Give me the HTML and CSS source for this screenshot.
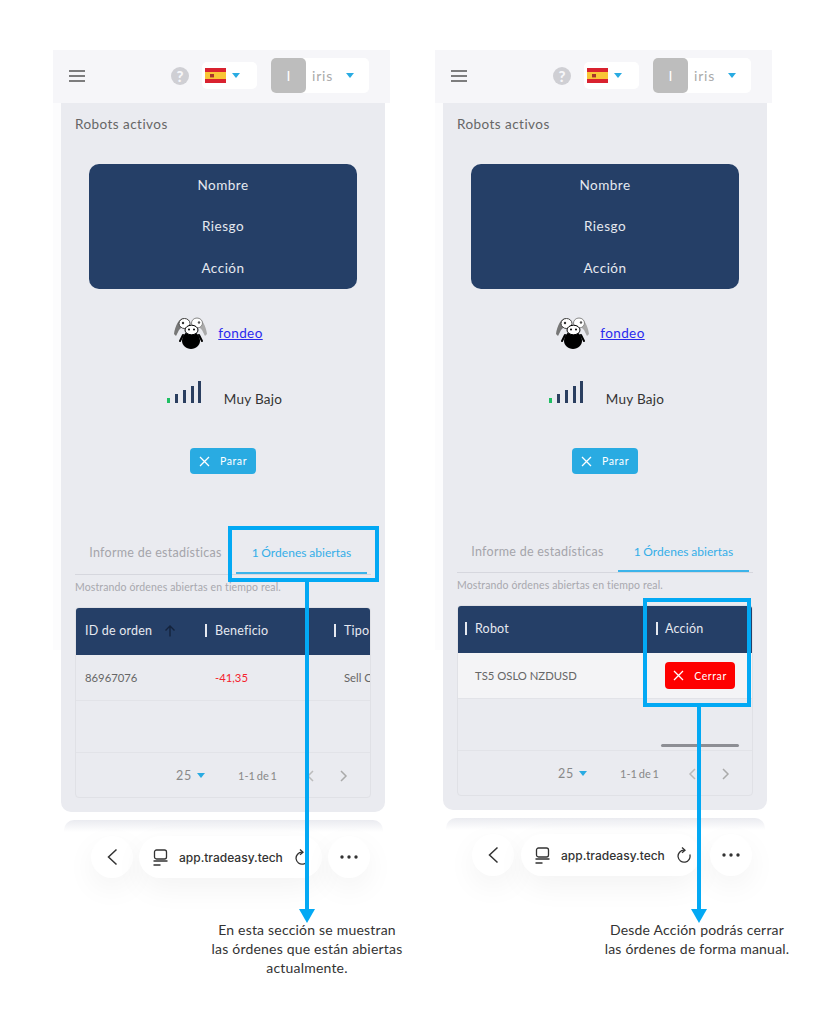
FILE: index.html
```html
<!DOCTYPE html>
<html lang="es">
<head>
    <meta charset="UTF-8">
    <meta name="viewport" content="width=device-width, initial-scale=1.0">
    <title>Órdenes abiertas</title>
    <link rel="stylesheet" href="styles.css">
</head>
<body>

<div class="page">

    <!-- Left screen: open orders tab -->
    <section class="phone">
        <header class="topbar">
            <svg class="menu" width="16" height="12" viewBox="0 0 16 12"><path d="M0 1h16M0 6h16M0 11h16" stroke="#555" stroke-width="1.6"/></svg>
            <span class="help">?</span>
            <div class="lang">
                <svg class="flag" width="21" height="15" viewBox="0 0 21 15"><rect width="21" height="15" fill="#d9222f"/><rect y="4" width="21" height="7" fill="#f9c536"/><rect x="5" y="6" width="4" height="3.4" fill="#a8342a"/></svg>
                <span class="caret"></span>
            </div>
            <div class="user">
                <span class="avatar">I</span>
                <span class="user-name">iris</span>
                <span class="caret"></span>
            </div>
        </header>

        <main class="panel">
            <div class="panel-title">Robots activos</div>
            <div class="robot-head">
                <div>Nombre</div>
                <div>Riesgo</div>
                <div>Acción</div>
            </div>
            <div class="robot-name">
                <svg width="33" height="32" viewBox="0 0 33 32">
                    <path d="M10 1C5 1 1 9 0 17l2 2 3-6 4-4z" fill="#777"/>
                    <path d="M23 1c5 0 9 8 10 16l-2 2-3-6-4-4z" fill="#aaa"/>
                    <ellipse cx="10.500" cy="6.500" rx="5.500" ry="5" fill="#fff" stroke="#444"/>
                    <ellipse cx="23" cy="6" rx="5.500" ry="5" fill="#fff" stroke="#888"/>
                    <circle cx="9" cy="6" r="1.200" fill="#333"/><circle cx="25" cy="5.500" r="1.200" fill="#555"/>
                    <path d="M17 14c6 0 9 6 9 10 0 4-4 8-9 8s-9-4-9-8c0-4 3-10 9-10z" fill="#000"/>
                    <path d="M9 18l-3 6M25 18l3 6" stroke="#000" stroke-width="2" stroke-linecap="round"/>
                    <ellipse cx="17.500" cy="13" rx="6.500" ry="4.800" fill="#fff" stroke="#000"/>
                    <circle cx="15" cy="12.500" r="1" fill="#000"/><circle cx="20" cy="12.500" r="1" fill="#000"/>
                </svg>
                <a class="robot-link" href="#">fondeo</a>
            </div>
            <div class="risk">
                <svg class="signal" width="34" height="23" viewBox="0 0 34 23">
                    <rect x="0" y="17" width="3" height="5" fill="#1fbf63"/>
                    <rect x="8" y="13" width="3" height="9" fill="#2b3f60"/>
                    <rect x="16" y="9" width="3" height="13" fill="#2b3f60"/>
                    <rect x="24" y="5" width="3" height="17" fill="#2b3f60"/>
                    <rect x="31" y="0" width="3" height="22" fill="#2b3f60"/>
                </svg>
                <span>Muy Bajo</span>
            </div>
            <button class="btn btn-stop">
                <svg width="11" height="11" viewBox="0 0 11 11"><path d="M1 1l9 9M10 1l-9 9" stroke="#fff" stroke-width="1.3"/></svg>
                Parar
            </button>

            <div class="tabs">
                <div class="tab">Informe de estadísticas</div>
                <div class="tab tab-active">1 Órdenes abiertas</div>
            </div>
            <div class="note">Mostrando órdenes abiertas en tiempo real.</div>

            <div class="table">
                <div class="row-head">
                    <div class="col col-id">ID de orden
                        <svg class="sort" width="12" height="12" viewBox="0 0 12 12"><path d="M6 11.500V1M1.500 5.500L6 1l4.500 4.500" fill="none" stroke="#14233c" stroke-width="1.400"/></svg>
                    </div>
                    <div class="col col-sep col-profit">Beneficio</div>
                    <div class="col col-sep col-type">Tipo</div>
                </div>
                <div class="row-body">
                    <div class="col col-id">86967076</div>
                    <div class="col col-profit cell-loss">-41,35</div>
                    <div class="col col-type">Sell Orden</div>
                </div>
                <div class="row-empty"></div>
                <div class="table-foot">
                    <span class="per-page">25</span>
                    <span class="caret"></span>
                    <span class="range">1-1 de 1</span>
                    <svg class="page-prev" width="8" height="12" viewBox="0 0 8 12"><path d="M7 1L2 6l5 5" fill="none" stroke="#bbb" stroke-width="1.500"/></svg>
                    <svg class="page-next" width="8" height="12" viewBox="0 0 8 12"><path d="M1 1l5 5-5 5" fill="none" stroke="#aaa" stroke-width="1.500"/></svg>
                </div>
            </div>
        </main>

        <div class="next-card"></div>

        <div class="browser-bar">
            <span class="round-btn">
                <svg width="12" height="18" viewBox="0 0 12 18"><path d="M10.500 1.500L2.500 9l8 7.500" fill="none" stroke="#333" stroke-width="1.500"/></svg>
            </span>
            <div class="url-pill">
                <svg class="tab-icon" width="15" height="17" viewBox="0 0 15 17"><rect x="1.500" y="1" width="12" height="9" rx="2" fill="none" stroke="#333" stroke-width="1.300"/><path d="M0.500 12h14M0.500 16h7" stroke="#333" stroke-width="1.300"/></svg>
                <span class="url">app.tradeasy.tech</span>
                <svg class="reload" width="14" height="16" viewBox="0 0 14 16"><path d="M12.800 7.500A6 6 0 1 1 7 3.200" fill="none" stroke="#333" stroke-width="1.300"/><path d="M5 0.500L8 3.200 5 5.800" fill="none" stroke="#333" stroke-width="1.300"/></svg>
            </div>
            <span class="round-btn">
                <svg width="18" height="4" viewBox="0 0 18 4"><circle cx="2" cy="2" r="1.700" fill="#333"/><circle cx="9" cy="2" r="1.700" fill="#333"/><circle cx="16" cy="2" r="1.700" fill="#333"/></svg>
            </span>
        </div>

        <!-- Callout -->
        <div class="mark mark-tabs"></div>
        <div class="stem stem-tabs"></div>
        <div class="head head-tabs"></div>
        <p class="caption caption-tabs">En esta sección se muestran<br>las órdenes que están abiertas<br>actualmente.</p>
    </section>

    <!-- Right screen: action column -->
    <section class="phone phone-action">
        <header class="topbar">
            <svg class="menu" width="16" height="12" viewBox="0 0 16 12"><path d="M0 1h16M0 6h16M0 11h16" stroke="#555" stroke-width="1.6"/></svg>
            <span class="help">?</span>
            <div class="lang">
                <svg class="flag" width="21" height="15" viewBox="0 0 21 15"><rect width="21" height="15" fill="#d9222f"/><rect y="4" width="21" height="7" fill="#f9c536"/><rect x="5" y="6" width="4" height="3.4" fill="#a8342a"/></svg>
                <span class="caret"></span>
            </div>
            <div class="user">
                <span class="avatar">I</span>
                <span class="user-name">iris</span>
                <span class="caret"></span>
            </div>
        </header>

        <main class="panel">
            <div class="panel-title">Robots activos</div>
            <div class="robot-head">
                <div>Nombre</div>
                <div>Riesgo</div>
                <div>Acción</div>
            </div>
            <div class="robot-name">
                <svg width="33" height="32" viewBox="0 0 33 32">
                    <path d="M10 1C5 1 1 9 0 17l2 2 3-6 4-4z" fill="#777"/>
                    <path d="M23 1c5 0 9 8 10 16l-2 2-3-6-4-4z" fill="#aaa"/>
                    <ellipse cx="10.500" cy="6.500" rx="5.500" ry="5" fill="#fff" stroke="#444"/>
                    <ellipse cx="23" cy="6" rx="5.500" ry="5" fill="#fff" stroke="#888"/>
                    <circle cx="9" cy="6" r="1.200" fill="#333"/><circle cx="25" cy="5.500" r="1.200" fill="#555"/>
                    <path d="M17 14c6 0 9 6 9 10 0 4-4 8-9 8s-9-4-9-8c0-4 3-10 9-10z" fill="#000"/>
                    <path d="M9 18l-3 6M25 18l3 6" stroke="#000" stroke-width="2" stroke-linecap="round"/>
                    <ellipse cx="17.500" cy="13" rx="6.500" ry="4.800" fill="#fff" stroke="#000"/>
                    <circle cx="15" cy="12.500" r="1" fill="#000"/><circle cx="20" cy="12.500" r="1" fill="#000"/>
                </svg>
                <a class="robot-link" href="#">fondeo</a>
            </div>
            <div class="risk">
                <svg class="signal" width="34" height="23" viewBox="0 0 34 23">
                    <rect x="0" y="17" width="3" height="5" fill="#1fbf63"/>
                    <rect x="8" y="13" width="3" height="9" fill="#2b3f60"/>
                    <rect x="16" y="9" width="3" height="13" fill="#2b3f60"/>
                    <rect x="24" y="5" width="3" height="17" fill="#2b3f60"/>
                    <rect x="31" y="0" width="3" height="22" fill="#2b3f60"/>
                </svg>
                <span>Muy Bajo</span>
            </div>
            <button class="btn btn-stop">
                <svg width="11" height="11" viewBox="0 0 11 11"><path d="M1 1l9 9M10 1l-9 9" stroke="#fff" stroke-width="1.3"/></svg>
                Parar
            </button>

            <div class="tabs">
                <div class="tab">Informe de estadísticas</div>
                <div class="tab tab-active">1 Órdenes abiertas</div>
            </div>
            <div class="note">Mostrando órdenes abiertas en tiempo real.</div>

            <div class="table">
                <div class="row-head">
                    <div class="col col-sep col-robot">Robot</div>
                    <div class="col col-sep col-action">Acción</div>
                </div>
                <div class="row-body row-light">
                    <div class="col col-robot">TS5 OSLO NZDUSD</div>
                    <div class="col col-action">
                        <button class="btn btn-close">
                            <svg width="11" height="11" viewBox="0 0 11 11"><path d="M1 1l9 9M10 1l-9 9" stroke="#fff" stroke-width="1.3"/></svg>
                            Cerrar
                        </button>
                    </div>
                </div>
                <div class="row-empty"><span class="scroll-thumb"></span></div>
                <div class="table-foot">
                    <span class="per-page">25</span>
                    <span class="caret"></span>
                    <span class="range">1-1 de 1</span>
                    <svg class="page-prev" width="8" height="12" viewBox="0 0 8 12"><path d="M7 1L2 6l5 5" fill="none" stroke="#bbb" stroke-width="1.500"/></svg>
                    <svg class="page-next" width="8" height="12" viewBox="0 0 8 12"><path d="M1 1l5 5-5 5" fill="none" stroke="#aaa" stroke-width="1.500"/></svg>
                </div>
            </div>
        </main>

        <div class="next-card"></div>

        <div class="browser-bar">
            <span class="round-btn">
                <svg width="12" height="18" viewBox="0 0 12 18"><path d="M10.500 1.500L2.500 9l8 7.500" fill="none" stroke="#333" stroke-width="1.500"/></svg>
            </span>
            <div class="url-pill">
                <svg class="tab-icon" width="15" height="17" viewBox="0 0 15 17"><rect x="1.500" y="1" width="12" height="9" rx="2" fill="none" stroke="#333" stroke-width="1.300"/><path d="M0.500 12h14M0.500 16h7" stroke="#333" stroke-width="1.300"/></svg>
                <span class="url">app.tradeasy.tech</span>
                <svg class="reload" width="14" height="16" viewBox="0 0 14 16"><path d="M12.800 7.500A6 6 0 1 1 7 3.200" fill="none" stroke="#333" stroke-width="1.300"/><path d="M5 0.500L8 3.200 5 5.800" fill="none" stroke="#333" stroke-width="1.300"/></svg>
            </div>
            <span class="round-btn">
                <svg width="18" height="4" viewBox="0 0 18 4"><circle cx="2" cy="2" r="1.700" fill="#333"/><circle cx="9" cy="2" r="1.700" fill="#333"/><circle cx="16" cy="2" r="1.700" fill="#333"/></svg>
            </span>
        </div>

        <!-- Callout -->
        <div class="mark mark-action"></div>
        <div class="stem stem-action"></div>
        <div class="head head-action"></div>
        <p class="caption caption-action">Desde Acción podrás cerrar<br>las órdenes de forma manual.</p>
    </section>

</div>

</body>
</html>
```

FILE: styles.css
```css
html, body {
    margin: 0;
    padding: 0;
    background: #fff;
}
body {
    font-family: 'Lato', 'Open Sans', sans-serif;
    color: #333;
    overflow: hidden;
}
.page {
    display: flex;
    gap: 45px;
    width: 835px;
    height: 1024px;
    box-sizing: border-box;
    padding: 50px 0 0 53px;
}
.phone {
    position: relative;
    width: 337px;
    flex: none;
    background: linear-gradient(#fcfcfd, #fcfcfd) no-repeat 0 0 / 8px 600px;
}

/* top bar */
.topbar {
    height: 53px;
    box-sizing: border-box;
    padding-bottom: 2px;
    background: #f6f6f9;
    display: flex;
    align-items: center;
}
.menu {
    margin-left: 16px;
}
.help {
    width: 18px;
    height: 18px;
    margin-left: 86px;
    border-radius: 50%;
    background: #cfcfd4;
    color: #f6f6f9;
    font-size: 15px;
    font-weight: 900;
    line-height: 18px;
    text-align: center;
}
.lang {
    width: 55px;
    height: 27px;
    margin-left: 13px;
    display: flex;
    align-items: center;
    background: #fff;
    border-radius: 5px;
}
.flag {
    margin-left: 3px;
}
.caret {
    display: inline-block;
    width: 0;
    height: 0;
    border-left: 4.5px solid transparent;
    border-right: 4.5px solid transparent;
    border-top: 5px solid #29abe2;
}
.lang .caret {
    margin-left: 6px;
}
.user {
    width: 98px;
    height: 35px;
    margin-left: 14px;
    display: flex;
    align-items: center;
    background: #fff;
    border-radius: 5px;
}
.avatar {
    width: 35px;
    height: 35px;
    border-radius: 5px;
    background: #bdbdbd;
    color: #fff;
    font-size: 14px;
    line-height: 35px;
    text-align: center;
}
.user-name {
    margin-left: 6px;
    color: #aaa;
    font-size: 14px;
    letter-spacing: 0.8px;
}
.user .caret {
    margin-left: 13px;
}

/* main panel */
.panel {
    width: 324px;
    margin-left: 8px;
    box-sizing: border-box;
    padding: 11px 14px 14px;
    background: #eaebf0;
    border-radius: 0 0 10px 10px;
}
.panel-title {
    font-size: 13.5px;
    line-height: 20px;
    color: #666;
    letter-spacing: 0.45px;
}
.robot-head {
    margin: 30px 14px 0;
    height: 125px;
    display: grid;
    grid-template-rows: repeat(3, 1fr);
    align-items: center;
    text-align: center;
    background: #253f67;
    border-radius: 10px;
    color: #e6e9f0;
    font-size: 13.5px;
    letter-spacing: 0.5px;
}
.robot-name {
    margin-top: 28px;
    height: 32px;
    padding-right: 9px;
    display: flex;
    justify-content: center;
    align-items: center;
    gap: 11px;
}
.robot-link {
    color: #2a2aee;
    font-size: 13.5px;
    letter-spacing: 0.4px;
}
.risk {
    margin-top: 32px;
    height: 28px;
    padding-left: 3px;
    display: flex;
    justify-content: center;
    align-items: flex-end;
    gap: 23px;
    font-size: 13.5px;
    line-height: 20px;
    letter-spacing: 0.3px;
    color: #333;
}
.signal {
    align-self: flex-start;
}
.btn {
    display: flex;
    align-items: center;
    justify-content: center;
    gap: 10px;
    border: none;
    border-radius: 4px;
    color: #fff;
    font-family: inherit;
    font-size: 10.5px;
    letter-spacing: 0.6px;
    padding: 0;
}
.btn-stop {
    width: 66px;
    height: 26px;
    margin: 39px auto 0;
    background: #29abe2;
}
.btn-close {
    width: 70px;
    height: 27px;
    background: #fe0000;
}

/* tabs */
.tabs {
    margin-top: 58px;
    height: 42px;
    display: flex;
    border-bottom: 1px solid #d6d7de;
}
.tab {
    width: 161px;
    height: 42px;
    box-sizing: border-box;
    padding-top: 12px;
    font-size: 12.5px;
    line-height: 18px;
    letter-spacing: 0.27px;
    text-align: center;
    color: #a5a5ab;
}
.tab-active {
    width: 131px;
    color: #35aee8;
    font-size: 12px;
    letter-spacing: 0.05px;
    word-spacing: -0.5px;
    border-bottom: 2px solid #3cb4ea;
}
.note {
    margin-top: 5px;
    font-size: 10.5px;
    line-height: 14px;
    letter-spacing: 0.13px;
    color: #a8a8ae;
}
.phone-action .tabs {
    margin-top: 56px;
}
.phone-action .tab {
    padding-top: 13px;
}

/* table */
.table {
    margin-top: 13px;
    height: 191px;
    box-sizing: border-box;
    position: relative;
    border: 1px solid #e0e1e6;
    border-radius: 4px;
    overflow: hidden;
}
.row-head, .row-body {
    display: flex;
    align-items: center;
    white-space: nowrap;
}
.row-head {
    height: 48px;
    box-sizing: border-box;
    padding-bottom: 2px;
    margin: -1px -1px 0;
    background: #253f67;
    color: #e6e9f0;
    font-size: 12.5px;
    letter-spacing: 0.2px;
}
.row-body {
    height: 45px;
    margin: 0 -1px;
    font-size: 11.3px;
    color: #666;
    border-bottom: 1px solid #e2e3e8;
}
.row-light {
    background: #f4f4f6;
}
.col {
    flex: none;
    box-sizing: border-box;
    padding-left: 10px;
}
.col-id {
    width: 130px;
}
.col-profit {
    width: 129px;
}
.col-type {
    width: 90px;
}
.col-robot {
    width: 199px;
    padding-left: 18px;
}
.col-action {
    width: 97px;
    padding-left: 9px;
}
.col-sep {
    position: relative;
}
.col-sep::before {
    content: "";
    position: absolute;
    left: 0;
    top: 1px;
    bottom: 1px;
    width: 2px;
    background: #e6e9f0;
}
.row-head .col-robot::before {
    left: 8px;
}
.sort {
    margin-left: 8px;
    vertical-align: -2px;
}
.cell-loss {
    color: #f5222d;
}
.row-empty {
    height: 51px;
    position: relative;
    border-bottom: 1px solid #e2e3e8;
}
.scroll-thumb {
    position: absolute;
    left: 203px;
    bottom: 3px;
    width: 78px;
    height: 3px;
    border-radius: 2px;
    background: #8d8e94;
}
.table-foot {
    height: 45px;
    display: flex;
    align-items: center;
    font-size: 11px;
    color: #888;
}
.per-page {
    margin-left: 100px;
    font-size: 12.5px;
    letter-spacing: 0.8px;
}
.table-foot .caret {
    margin-left: 5px;
}
.range {
    margin-left: 33px;
    word-spacing: -1px;
}
.page-prev {
    margin-left: 29px;
}
.page-next {
    margin-left: 26px;
}

/* browser bar */
.next-card {
    width: 319px;
    height: 12px;
    margin: 8px 0 0 11px;
    border-radius: 10px 10px 0 0;
    background: linear-gradient(#eaebf0, #fff);
}
.browser-bar {
    margin-top: 4px;
    padding-left: 38px;
    display: flex;
    gap: 6px;
}
.phone-action .browser-bar {
    padding-left: 37px;
    gap: 7px;
}
.round-btn, .url-pill {
    height: 42px;
    background: #fff;
    border-radius: 21px;
    box-shadow: 0 10px 30px rgba(0, 0, 0, 0.05);
    display: flex;
    align-items: center;
}
.round-btn {
    width: 42px;
    justify-content: center;
}
.url-pill {
    width: 183px;
    box-sizing: border-box;
    padding-left: 14px;
}
.phone-action .url-pill {
    width: 179px;
    margin-right: 3px;
}
.url {
    margin-left: 11px;
    font-family: 'Inter', sans-serif;
    font-size: 12px;
    font-weight: 500;
    color: #333;
}
.reload {
    margin-left: 12px;
}

/* callouts over the screens */
.mark {
    position: absolute;
    box-sizing: border-box;
    border: 4px solid #03a9f4;
}
.mark-tabs {
    left: 175px;
    top: 476px;
    width: 151px;
    height: 56px;
}
.mark-action {
    left: 208px;
    top: 548px;
    width: 108px;
    height: 109px;
}
.stem {
    position: absolute;
    width: 4px;
    background: #03a9f4;
}
.stem-tabs {
    left: 252px;
    top: 532px;
    height: 330px;
}
.stem-action {
    left: 262px;
    top: 657px;
    height: 205px;
}
.head {
    position: absolute;
    top: 859px;
    width: 0;
    height: 0;
    border-left: 8.5px solid transparent;
    border-right: 8.5px solid transparent;
    border-top: 14px solid #03a9f4;
}
.head-tabs {
    left: 245.500px;
}
.head-action {
    left: 255.500px;
}
.caption {
    position: absolute;
    top: 870px;
    width: 240px;
    margin: 0;
    font-size: 14px;
    line-height: 19px;
    letter-spacing: 0.2px;
    text-align: center;
    color: #333;
}
.caption-tabs {
    left: 134px;
}
.caption-action {
    left: 142px;
}
```
